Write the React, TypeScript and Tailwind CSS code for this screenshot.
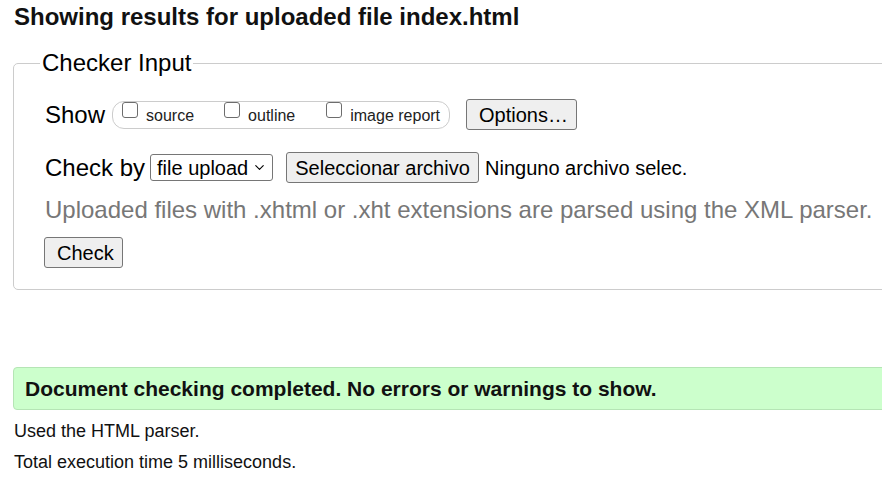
import { ChevronDown } from 'lucide-react';

const btn =
  'h-[31px] whitespace-nowrap text-[20px] leading-none bg-[#efefef] border border-[#767676] rounded-[3px] text-black';

const box =
  'appearance-none w-[16px] h-[16px] mb-[9px] bg-white border border-[#6d6d6d] rounded-[3px]';

export default function App() {
  return (
    <div className="w-[882px] h-[478px] overflow-hidden bg-white text-black font-['Liberation_Sans',Arial,sans-serif]">
      <div className="w-[940px] pl-[13px]">
        <h2 className="pt-[3px] pl-[1px] text-[24px] leading-[28px] font-bold text-[#111]">
          Showing results for uploaded file index.html
        </h2>

        <fieldset className="mt-[18px] border border-[#cccccc] rounded-[5px] pl-[26px] pb-[21px]">
          <legend className="px-[2px] text-[24px] leading-[28px]">Checker Input</legend>

          <div className="pl-[5px]">
            <div className="mt-[22px] h-[31px] flex items-center">
              <span className="text-[24px] leading-[28px]">Show</span>
              <div className="ml-[7px] h-[28px] flex items-center pl-[9px] pr-[9px] border border-[#cccccc] rounded-[12px]">
                <label className="flex items-center">
                  <input type="checkbox" className={box} />
                  <span className="ml-[8px] mt-[2px] text-[16px] leading-[19px] text-[#222]">source</span>
                </label>
                <label className="ml-[30px] flex items-center">
                  <input type="checkbox" className={box} />
                  <span className="ml-[8px] mt-[2px] text-[16px] leading-[19px] text-[#222]">outline</span>
                </label>
                <label className="ml-[31px] flex items-center">
                  <input type="checkbox" className={box} />
                  <span className="ml-[8px] mt-[2px] text-[16px] leading-[19px] text-[#222]">image report</span>
                </label>
              </div>
              <button className={`ml-[16px] w-[111px] px-[12px] ${btn}`}>Options…</button>
            </div>

            <div className="mt-[22px] h-[31px] flex items-center">
              <span className="text-[24px] leading-[28px]">Check by</span>
              <div className="ml-[5px] w-[123px] h-[27px] flex items-center justify-between pl-[6px] pr-[5px] border border-[#767676] rounded-[3px] bg-white">
                <span className="text-[20px] leading-none">file upload</span>
                <ChevronDown className="w-[15px] h-[15px]" strokeWidth={1.8} />
              </div>
              <button className={`ml-[13px] w-[193px] px-[6px] ${btn}`}>Seleccionar archivo</button>
              <span className="ml-[6px] text-[20px] leading-none">Ninguno archivo selec.</span>
            </div>

            <p className="mt-[13px] text-[24px] leading-[28px] text-[#777777]">
              Uploaded files with .xhtml or .xht extensions are parsed using the XML parser.
            </p>

            <button className={`mt-[13px] -ml-[1px] w-[79px] px-[12px] ${btn}`}>Check</button>
          </div>
        </fieldset>

        <div className="mt-[77px] h-[43px] flex items-center pl-[11px] bg-[#ccffcc] border border-[#b5e5b5] rounded-[4px]">
          <span className="text-[21px] leading-none font-bold text-[#111]">
            Document checking completed. No errors or warnings to show.
          </span>
        </div>

        <div className="mt-[6px] pl-[1px] text-[18px] leading-[31px] text-[#111]">
          <p>Used the HTML parser.</p>
          <p>Total execution time 5 milliseconds.</p>
        </div>
      </div>
    </div>
  );
}
